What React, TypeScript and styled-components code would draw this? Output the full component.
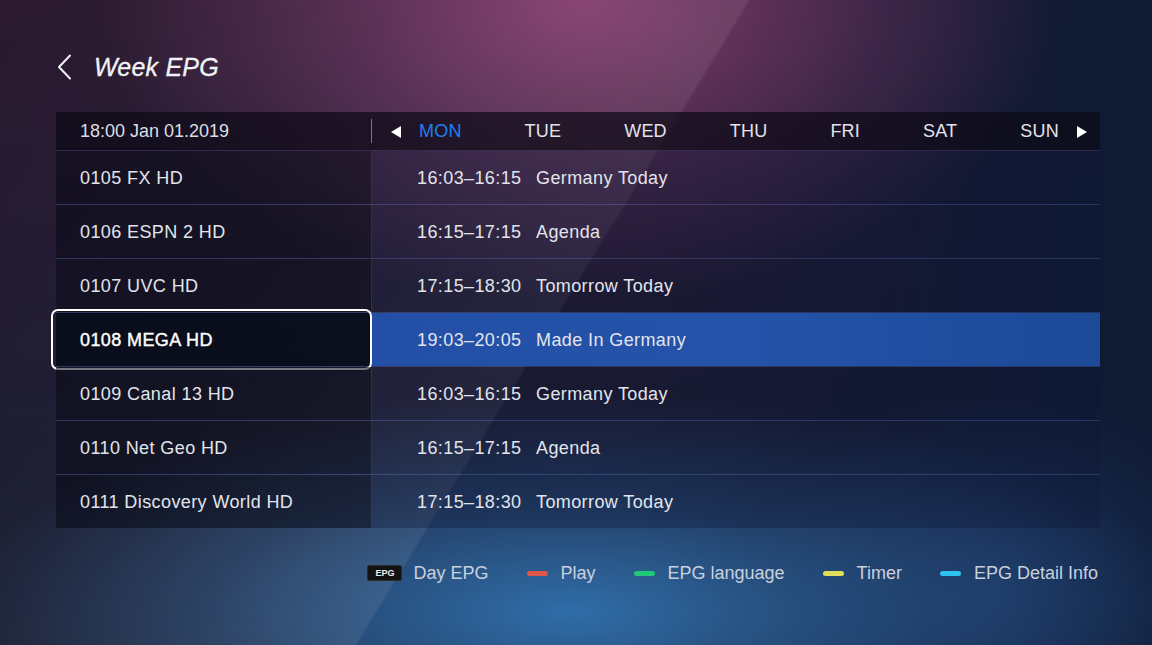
import React from "react";
import styled, { createGlobalStyle } from "styled-components";

const GlobalStyle = createGlobalStyle`
  html, body { margin: 0; padding: 0; background: #161a2c; }
  body { font-family: "Liberation Sans", Arial, sans-serif; }
  * { box-sizing: border-box; }
`;

const Page = styled.div`
  position: relative;
  width: 1152px;
  height: 645px;
  overflow: hidden;
  padding: 52px 52px 0 56px;
  display: flex;
  flex-direction: column;
  color: #e4e6ee;
  background:
    radial-gradient(ellipse 480px 300px at 580px 0px, rgba(136, 62, 112, 0.95), rgba(120, 60, 110, 0.4) 60%, rgba(120, 60, 110, 0) 100%),
    radial-gradient(ellipse 620px 220px at 570px 612px, rgba(50, 118, 182, 0.9), rgba(44, 96, 156, 0.4) 60%, rgba(44, 96, 156, 0) 100%),
    radial-gradient(ellipse 260px 200px at 1000px 590px, rgba(36, 74, 130, 0.45), rgba(36, 74, 130, 0) 100%),
    linear-gradient(90deg, rgba(14, 26, 52, 0) 55%, rgba(14, 26, 52, 0.9) 92%),
    linear-gradient(180deg, #2c1a30 0%, #221a32 40%, #1a1c30 75%, #1a1e30 100%);

  &::before {
    content: "";
    position: absolute;
    inset: 0;
    pointer-events: none;
    background: linear-gradient(
      121.4deg,
      rgba(255, 255, 255, 0) 0%,
      rgba(255, 255, 255, 0.02) 25%,
      rgba(255, 255, 255, 0.08) 48.4%,
      rgba(255, 255, 255, 0) 48.6%
    );
  }
`;

const Content = styled.div`
  position: relative;
  z-index: 1;
  display: flex;
  flex-direction: column;
`;

const TitleBar = styled.div`
  display: flex;
  align-items: center;
  height: 30px;
  gap: 20px;
`;

const Title = styled.h1`
  margin: 0;
  font-size: 25px;
  font-style: italic;
  font-weight: 400;
  color: #f2f2f6;
  letter-spacing: 0.2px;
  -webkit-text-stroke: 0.3px #f2f2f6;
`;

const Table = styled.div`
  margin-top: 30px;
  width: 1044px;
  display: flex;
  flex-direction: column;
`;

const HeaderRow = styled.div`
  display: grid;
  grid-template-columns: 316px 1fr;
  height: 39px;
  background: rgba(12, 10, 22, 0.72);
  border-bottom: 1px solid rgba(110, 90, 160, 0.35);
`;

const DateCell = styled.div`
  display: flex;
  align-items: center;
  padding: 1px 0 0 24px;
  font-size: 18px;
  color: #dcdde4;
`;

const DaysCell = styled.div`
  display: flex;
  align-items: center;
  padding: 1px 0 0 19px;
  position: relative;
  &::before {
    content: "";
    position: absolute;
    left: -1px;
    top: 7px;
    width: 1px;
    height: 24px;
    background: rgba(200, 200, 215, 0.55);
  }
`;

const Days = styled.div`
  display: flex;
  align-items: center;
  gap: 63px;
  margin: 0 18px 0 18px;
`;

const Day = styled.span<{ $active?: boolean }>`
  font-size: 18px;
  letter-spacing: 0.2px;
  color: ${(p) => (p.$active ? "#1f7ef2" : "#e2e3ea")};
`;

const Row = styled.div`
  display: grid;
  grid-template-columns: 316px 1fr;
  height: 54px;
  border-bottom: 1px solid rgba(70, 95, 170, 0.4);
  &:last-child {
    border-bottom: none;
    height: 53px;
  }
`;

const ChannelCell = styled.div<{ $selected?: boolean }>`
  position: relative;
  display: flex;
  align-items: center;
  padding: 1px 0 0 24px;
  font-size: 18px;
  letter-spacing: 0.4px;
  color: ${(p) => (p.$selected ? "#ffffff" : "#e2e4ec")};
  -webkit-text-stroke: ${(p) => (p.$selected ? "0.4px #ffffff" : "0")};
  background: ${(p) => (p.$selected ? "rgba(6, 10, 24, 0.85)" : "rgba(8, 10, 22, 0.55)")};
  border-right: 1px solid rgba(80, 100, 160, 0.35);
`;

const FocusRing = styled.div`
  position: absolute;
  left: -5px;
  right: -1px;
  top: -4px;
  bottom: -4px;
  border: 2px solid #ffffff;
  border-radius: 7px;
  pointer-events: none;
`;

const ProgramCell = styled.div<{ $selected?: boolean }>`
  display: flex;
  align-items: center;
  padding: 1px 0 0 45px;
  font-size: 18px;
  letter-spacing: 0.4px;
  color: #e2e4ec;
  background: ${(p) =>
    p.$selected
      ? "linear-gradient(90deg, #2350a6 0%, #2453aa 50%, #1b4a98 100%)"
      : "rgba(16, 22, 52, 0.32)"};
`;

const Time = styled.span`
  display: inline-block;
  width: 119px;
`;

const Legend = styled.div`
  margin-top: 35px;
  width: 1042px;
  height: 20px;
  display: flex;
  justify-content: flex-end;
  align-items: center;
  gap: 38px;
`;

const LegendItem = styled.div<{ $gap?: number }>`
  display: flex;
  align-items: center;
  gap: ${(p) => p.$gap ?? 13}px;
  font-size: 18px;
  color: #c9d0de;
`;

const Badge = styled.span`
  display: inline-flex;
  align-items: center;
  justify-content: center;
  width: 35px;
  height: 16px;
  background: #121212;
  border: 1px solid #2c2c2c;
  border-radius: 2px;
  font-size: 9px;
  font-weight: 700;
  color: #eeeeee;
`;

const ColorBar = styled.span<{ $color: string }>`
  display: inline-block;
  width: 21px;
  height: 5px;
  border-radius: 3px;
  background: ${(p) => p.$color};
`;

const BackIcon = () => (
  <svg width="18" height="26" viewBox="0 0 18 26">
    <path d="M14 1.5 L3 13 L14 24.5" fill="none" stroke="#f0f0f4" strokeWidth="2" strokeLinecap="round" strokeLinejoin="round" />
  </svg>
);

const Triangle = ({ dir }: { dir: "left" | "right" }) => (
  <svg width="10" height="12" viewBox="0 0 10 12">
    {dir === "left" ? <polygon points="10,0 10,12 0,6" fill="#ffffff" /> : <polygon points="0,0 0,12 10,6" fill="#ffffff" />}
  </svg>
);

const rows = [
  { ch: "0105 FX HD", time: "16:03–16:15", title: "Germany Today" },
  { ch: "0106 ESPN 2 HD", time: "16:15–17:15", title: "Agenda" },
  { ch: "0107 UVC HD", time: "17:15–18:30", title: "Tomorrow Today" },
  { ch: "0108 MEGA HD", time: "19:03–20:05", title: "Made In Germany", selected: true },
  { ch: "0109 Canal 13 HD", time: "16:03–16:15", title: "Germany Today" },
  { ch: "0110 Net Geo HD", time: "16:15–17:15", title: "Agenda" },
  { ch: "0111 Discovery World HD", time: "17:15–18:30", title: "Tomorrow Today" },
];

const days = ["MON", "TUE", "WED", "THU", "FRI", "SAT", "SUN"];

const legend = [
  { color: "#e0574a", label: "Play" },
  { color: "#1ec878", label: "EPG language" },
  { color: "#e2de5a", label: "Timer" },
  { color: "#2ec2f2", label: "EPG Detail Info" },
];

export default function App() {
  return (
    <>
      <GlobalStyle />
      <Page>
        <Content>
          <TitleBar>
            <BackIcon />
            <Title>Week EPG</Title>
          </TitleBar>
          <Table>
            <HeaderRow>
              <DateCell>18:00 Jan 01.2019</DateCell>
              <DaysCell>
                <Triangle dir="left" />
                <Days>
                  {days.map((d, i) => (
                    <Day key={d} $active={i === 0}>
                      {d}
                    </Day>
                  ))}
                </Days>
                <Triangle dir="right" />
              </DaysCell>
            </HeaderRow>
            {rows.map((r) => (
              <Row key={r.ch}>
                <ChannelCell $selected={r.selected}>
                  {r.ch}
                  {r.selected && <FocusRing />}
                </ChannelCell>
                <ProgramCell $selected={r.selected}>
                  <Time>{r.time}</Time>
                  {r.title}
                </ProgramCell>
              </Row>
            ))}
          </Table>
          <Legend>
            <LegendItem $gap={11}>
              <Badge>EPG</Badge>
              Day EPG
            </LegendItem>
            {legend.map((l) => (
              <LegendItem key={l.label}>
                <ColorBar $color={l.color} />
                {l.label}
              </LegendItem>
            ))}
          </Legend>
        </Content>
      </Page>
    </>
  );
}
